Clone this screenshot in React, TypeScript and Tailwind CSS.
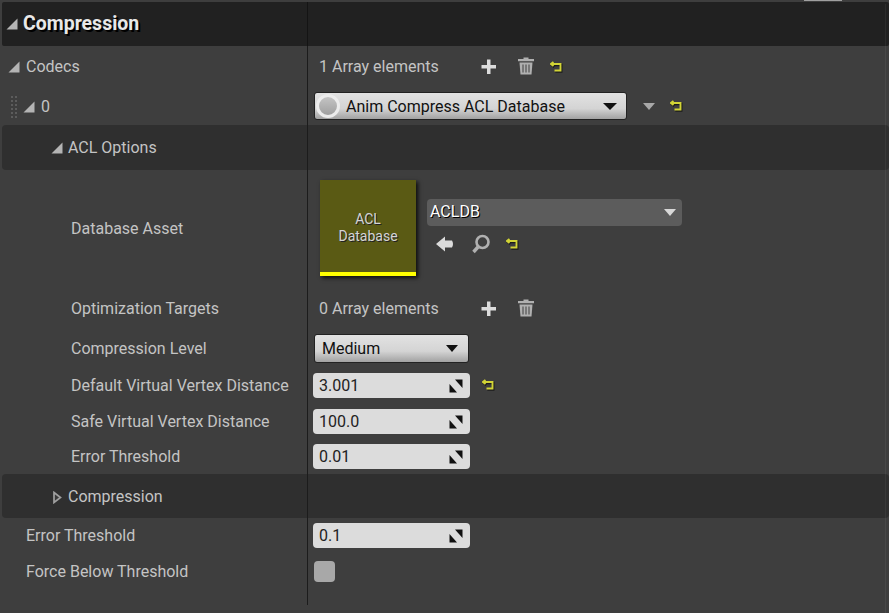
import type { ReactNode } from 'react';

const Arrow = ({ open = true, className = '' }: { open?: boolean; className?: string }) =>
  open ? (
    <svg width="12" height="12" viewBox="0 0 12 12" className={`shrink-0 ${className}`}>
      <path d="M11.5 0.5V11.5H0.5Z" fill="#b4b4b4" />
    </svg>
  ) : (
    <svg width="10" height="13" viewBox="0 0 10 13" className={`shrink-0 ${className}`}>
      <path d="M2 1.5L8.5 6.5L2 11.5Z" fill="#3a3a3a" stroke="#a0a0a0" strokeWidth="1.7" />
    </svg>
  );

const ResetIcon = () => (
  <svg width="13" height="13" viewBox="0 0 13 13" className="shrink-0">
    <path d="M3.5 1L1 3L3.5 5M1.5 3H10.5V9.5H4.5" fill="none" stroke="#000" strokeWidth="2.4" transform="translate(.8 1)" opacity=".55" />
    <path d="M3.5 1L1 3L3.5 5M1.5 3H10.5V9.5H4.5" fill="none" stroke="#d2d436" strokeWidth="1.9" />
  </svg>
);

const PlusIcon = () => (
  <svg width="18" height="18" viewBox="0 0 18 18" className="shrink-0">
    <path d="M7 1.5h3.5V7H16v3.5h-5.5V16H7v-5.5H1.5V7H7Z" fill="#dcdcdc" />
  </svg>
);

const TrashIcon = () => (
  <svg width="18" height="20" viewBox="0 0 18 20" className="shrink-0">
    <path d="M1 3h5.5V1.5h5V3H17v2.2H1Z" fill="#b0b0b0" />
    <path d="M2.5 6.5h13l-1 12h-11Z" fill="#b0b0b0" />
    <path d="M6 8.5v8M9 8.5v8M12 8.5v8" stroke="#5a5a5a" strokeWidth="1.3" />
  </svg>
);

const Caret = ({ color = '#111', w = 14 }: { color?: string; w?: number }) => (
  <svg width={w} height="7" viewBox="0 0 14 7" preserveAspectRatio="none" className="shrink-0">
    <path d="M0 0H14L7 7Z" fill={color} />
  </svg>
);

const SpinIcon = () => (
  <svg width="14" height="14" viewBox="0 0 14 14" className="shrink-0">
    <path d="M0.5 5V13.5H8Z" fill="#111" />
    <path d="M13.5 9V0.5H6Z" fill="#111" />
  </svg>
);

const Row = ({
  h,
  left,
  children,
  group,
  nudge,
}: {
  h: string;
  left?: ReactNode;
  children?: ReactNode;
  group?: boolean;
  nudge?: boolean;
}) => (
  <div className={`grid ${h} ${group ? 'ml-[2px] grid-cols-[305px_1fr] rounded-[4px] bg-[#2f2f2f]' : 'grid-cols-[307px_1fr]'}`}>
    <div className={`flex items-center text-[16px] text-[#c4c4c4] ${nudge ? 'pt-[2px]' : ''}`}>{left}</div>
    <div className={`flex items-center border-l border-[#1c1c1c] ${nudge ? 'pt-[1px]' : ''}`}>{children}</div>
  </div>
);

const Label = ({ text, pl = 'pl-[71px]' }: { text: string; pl?: string }) => <span className={pl}>{text}</span>;

const NumberBox = ({ value }: { value: string }) => (
  <div className="ml-[5px] flex h-[25px] w-[157px] items-center justify-between rounded-[4px] bg-[#dcdcdc] pl-[6px] pr-[7px] text-[16px] text-[#222]">
    <span>{value}</span>
    <SpinIcon />
  </div>
);

const ArrayInfo = ({ text, reset }: { text: string; reset?: boolean }) => (
  <div className="flex items-center pl-[11px] pt-[1px] text-[16px] text-[#c4c4c4]">
    <span className="w-[161px]">{text}</span>
    <PlusIcon />
    <span className="-mt-[3px] ml-[19px]"><TrashIcon /></span>
    {reset && <span className="ml-[15px]"><ResetIcon /></span>}
  </div>
);

const comboClass =
  'flex items-center rounded-[3px] border border-[#222] bg-gradient-to-b from-[#e2e2e2] via-[#d4d4d4] via-60% to-[#a2a2a2] text-[16px] text-[#111]';

export default function App() {
  return (
    <div className="relative h-[613px] w-[889px] overflow-hidden bg-[#3e3e3e] pt-[2px] font-['Roboto',sans-serif]">
      {/* scrollbar bits along the top and right edge */}
      <div className="absolute left-[804px] top-0 h-[1px] w-[38px] bg-[#a0a0a0]" />
      <div className="absolute bottom-0 right-[3px] top-[4px] w-[1px] bg-white/5" />

      {/* Category header */}
      <div className="ml-[2px] grid h-[44px] grid-cols-[305px_1fr] rounded-[2px] bg-[#212121]">
        <div className="flex items-center gap-[5px] pl-[4px]">
          <Arrow />
          <span className="text-[19.5px] font-bold text-[#e8e8e8] [text-shadow:2px_2px_0_#000]">Compression</span>
        </div>
        <div className="border-l border-[#141414]" />
      </div>

      <Row nudge h="h-[40px]" left={<span className="flex items-center gap-[6px] pl-[8px]"><Arrow />Codecs</span>}>
        <ArrayInfo text="1 Array elements" reset />
      </Row>

      <Row
        nudge
        h="h-[39px]"
        left={
          <span className="flex items-center pl-[11px]">
            <span className="grid grid-cols-2 gap-[2px]">
              {Array.from({ length: 12 }).map((_, i) => (
                <span key={i} className="h-[2px] w-[2px] bg-[#5c5c5c]" />
              ))}
            </span>
            <Arrow className="ml-[6px]" />
            <span className="ml-[6px]">0</span>
          </span>
        }
      >
        <div className={`${comboClass} ml-[6px] h-[28px] w-[313px] pl-[1px] pr-[9px]`}>
          <span className="h-[24px] w-[24px] shrink-0 rounded-full border-[3px] border-[#ececec] bg-gradient-to-b from-[#c4c4c4] to-[#a0a0a0]" />
          <span className="ml-[6px] flex-1 pt-[1px]">Anim Compress ACL Database</span>
          <Caret />
        </div>
        <span className="ml-[16px]"><Caret color="#a8a8a8" w={12} /></span>
        <span className="ml-[15px]"><ResetIcon /></span>
      </Row>

      <Row group h="h-[45px]" left={<span className="flex items-center gap-[5px] pl-[49px]"><Arrow />ACL Options</span>} />

      <Row h="h-[118px]" left={<Label text="Database Asset" />}>
        <div className="ml-[12px] mt-[10px] flex h-[96px] w-[96px] shrink-0 flex-col self-start bg-[#5a5a14] shadow-[2px_2px_4px_rgba(0,0,0,0.8)]">
          <div className="flex flex-1 flex-col items-center justify-center pt-[3px] text-[14px] leading-[17px] text-[#d4d4d4] [text-shadow:1px_1px_0_#222]">
            <span>ACL</span>
            <span>Database</span>
          </div>
          <div className="h-[4px] bg-[#ffff00]" />
        </div>
        <div className="ml-[11px] flex w-[255px] flex-col self-start pt-[29px]">
          <div className="flex h-[27px] items-center justify-between rounded-[4px] bg-[#5c5c5c] pb-[1px] pl-[3px] pr-[6px] text-[16px] text-white [text-shadow:1px_1px_0_#000]">
            <span>ACLDB</span>
            <Caret color="#d8d8d8" w={12} />
          </div>
          <div className="mt-[8px] flex items-center pl-[9px]">
            <svg width="18" height="18" viewBox="0 0 18 18" className="shrink-0">
              <path d="M0 9L9 1.5V5.5H16Q18 9 16 12.5H9V16.5Z" fill="#dcdcdc" />
            </svg>
            <svg width="20" height="20" viewBox="0 0 20 20" className="ml-[17px] shrink-0">
              <circle cx="11.5" cy="8" r="6" fill="none" stroke="#b0b0b0" strokeWidth="2.6" />
              <path d="M7 13L2.5 18" stroke="#b0b0b0" strokeWidth="3.4" />
            </svg>
            <span className="ml-[15px]"><ResetIcon /></span>
          </div>
        </div>
      </Row>

      <Row nudge h="h-[40px]" left={<Label text="Optimization Targets" />}>
        <ArrayInfo text="0 Array elements" />
      </Row>

      <Row nudge h="h-[39px]" left={<Label text="Compression Level" />}>
        <div className={`${comboClass} ml-[6px] h-[29px] w-[155px] justify-between pl-[7px] pr-[10px]`}>
          <span className="pt-[1px]">Medium</span>
          <Caret w={12} />
        </div>
      </Row>

      <Row nudge h="h-[36px]" left={<Label text="Default Virtual Vertex Distance" />}>
        <NumberBox value="3.001" />
        <span className="ml-[12px]"><ResetIcon /></span>
      </Row>
      <Row nudge h="h-[36px]" left={<Label text="Safe Virtual Vertex Distance" />}>
        <NumberBox value="100.0" />
      </Row>
      <Row h="h-[35px]" left={<Label text="Error Threshold" />}>
        <NumberBox value="0.01" />
      </Row>

      <Row group nudge h="h-[44px]" left={<span className="flex items-center gap-[6px] pl-[50px]"><Arrow open={false} />Compression</span>} />

      <Row h="h-[35px]" left={<Label text="Error Threshold" pl="pl-[26px]" />}>
        <NumberBox value="0.1" />
      </Row>
      <Row nudge h="h-[36px]" left={<Label text="Force Below Threshold" pl="pl-[26px]" />}>
        <div className="ml-[6px] h-[21px] w-[21px] rounded-[4px] bg-[#a8a8a8]" />
      </Row>
      <Row h="h-[16px]" />
    </div>
  );
}
